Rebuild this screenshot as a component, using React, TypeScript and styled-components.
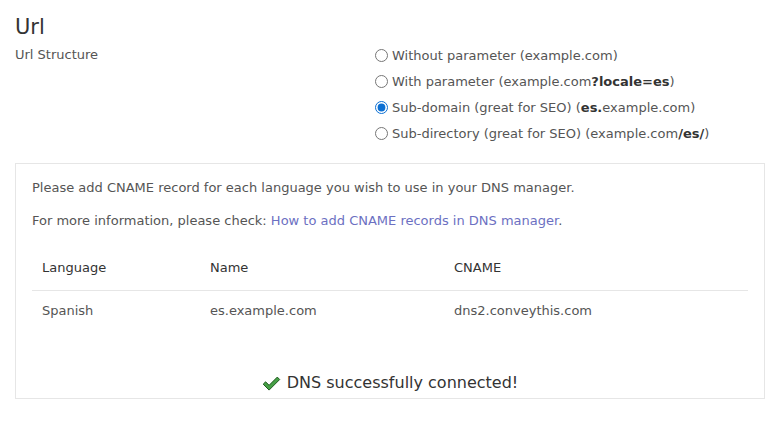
import React, { useState } from 'react';
import styled, { createGlobalStyle } from 'styled-components';

const GlobalStyle = createGlobalStyle`
  body {
    margin: 0;
    background: #ffffff;
    font-family: "DejaVu Sans", "Open Sans", sans-serif;
    color: #555;
  }
`;

const Page = styled.div`
  padding: 15px 13px 0 15px;
`;

const Title = styled.h2`
  margin: 0;
  font-size: 21px;
  line-height: 24px;
  font-weight: 500;
  color: #333;
`;

const SettingRow = styled.div`
  display: grid;
  grid-template-columns: 360px 1fr;
  margin-top: 3px;
`;

const Label = styled.div`
  font-size: 13px;
  line-height: 26px;
  color: #555;
`;

const RadioList = styled.div`
  display: flex;
  flex-direction: column;
`;

const RadioLabel = styled.label`
  display: flex;
  align-items: center;
  gap: 4px;
  height: 26px;
  font-size: 13px;
  color: #555;
  cursor: pointer;

  b {
    color: #333;
  }
`;

const Radio = styled.input`
  margin: 0;
  width: 13px;
  height: 13px;
  accent-color: #0b6fd3;
`;

const Card = styled.div`
  margin-top: 17px;
  border: 1px solid #e6e6e6;
  padding: 14px 16px 3px;
`;

const Note = styled.p`
  margin: 0 0 13px;
  font-size: 13px;
  line-height: 20px;
  color: #555;
`;

const HelpLink = styled.a`
  color: #6c70c2;
  text-decoration: none;
`;

const Table = styled.table`
  width: 100%;
  table-layout: fixed;
  margin-top: 15px;
  border-collapse: collapse;
  font-size: 13px;
`;

const Th = styled.th<{ $w?: number }>`
  width: ${(p) => (p.$w ? `${p.$w - 20}px` : 'auto')};
  padding: 12px 10px;
  line-height: 20px;
  text-align: left;
  font-weight: 500;
  color: #333;
  border-bottom: 1px solid #e6e6e6;
`;

const Td = styled.td`
  padding: 10px 10px;
  line-height: 20px;
  color: #555;
`;

const Success = styled.div`
  display: flex;
  justify-content: center;
  align-items: center;
  gap: 6px;
  margin-top: 40px;
  font-size: 16px;
  line-height: 24px;
  color: #333;
`;

const CheckIcon = () => (
  <svg width="19" height="15" viewBox="0 0 19 15">
    <path
      d="M1.2 8.2 L3.6 5.8 L7.1 9.3 L15.3 1.1 L17.7 3.5 L7.1 14.1 Z"
      fill="#46a046"
      stroke="#1f5a1f"
      strokeWidth="1"
      strokeLinejoin="round"
    />
  </svg>
);

const options = [
  { id: 'none', text: 'Without parameter (example.com)' },
  { id: 'param', text: <>With parameter (example.com<b>?locale=es</b>)</> },
  { id: 'sub', text: <>Sub-domain (great for SEO) (<b>es.</b>example.com)</> },
  { id: 'dir', text: <>Sub-directory (great for SEO) (example.com<b>/es/</b>)</> },
];

export default function App() {
  const [mode, setMode] = useState('sub');

  return (
    <Page>
      <GlobalStyle />
      <Title>Url</Title>
      <SettingRow>
        <Label>Url Structure</Label>
        <RadioList>
          {options.map((o) => (
            <RadioLabel key={o.id}>
              <Radio
                type="radio"
                name="url"
                checked={mode === o.id}
                onChange={() => setMode(o.id)}
              />
              <span>{o.text}</span>
            </RadioLabel>
          ))}
        </RadioList>
      </SettingRow>

      <Card>
        <Note>Please add CNAME record for each language you wish to use in your DNS manager.</Note>
        <Note>
          For more information, please check:{' '}
          <HelpLink href="#">How to add CNAME records in DNS manager</HelpLink>.
        </Note>
        <Table>
          <thead>
            <tr>
              <Th $w={168}>Language</Th>
              <Th $w={244}>Name</Th>
              <Th>CNAME</Th>
            </tr>
          </thead>
          <tbody>
            <tr>
              <Td>Spanish</Td>
              <Td>es.example.com</Td>
              <Td>dns2.conveythis.com</Td>
            </tr>
          </tbody>
        </Table>
        <Success>
          <CheckIcon />
          DNS successfully connected!
        </Success>
      </Card>
    </Page>
  );
}
